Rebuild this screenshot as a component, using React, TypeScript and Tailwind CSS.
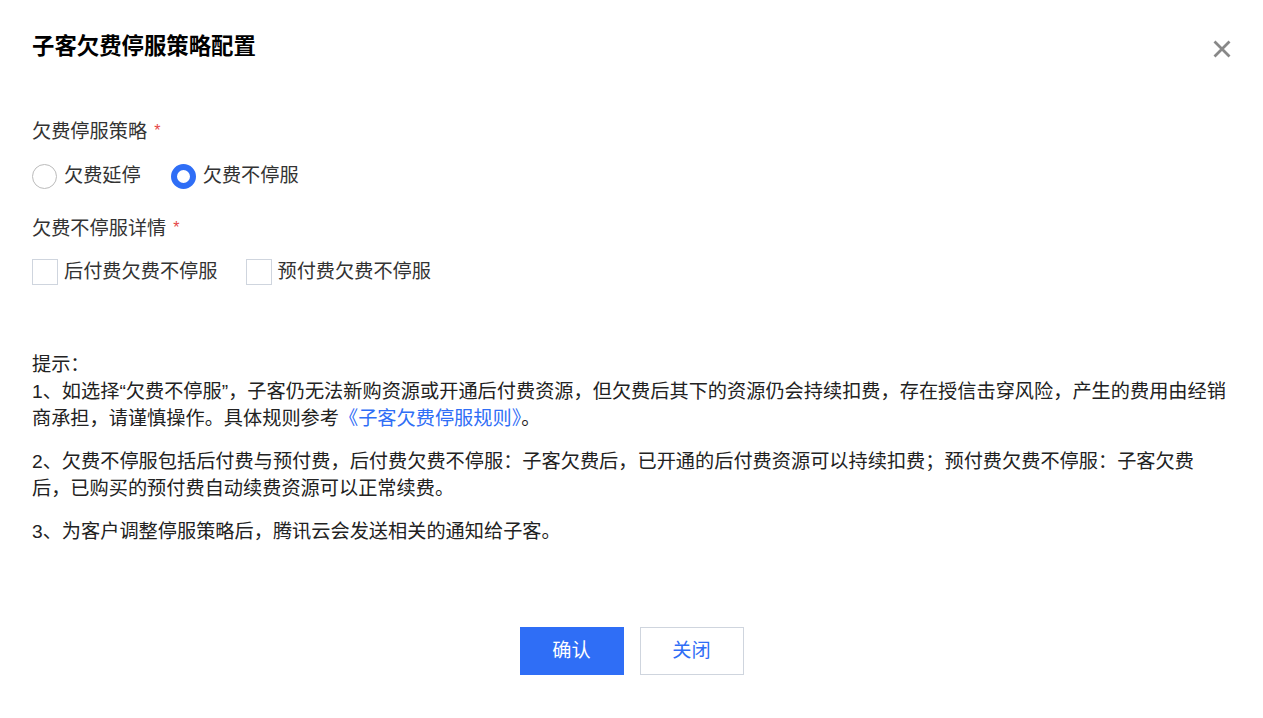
import { useState } from "react";

const fontStack = "font-['Liberation_Sans','Noto_Sans_CJK_SC',sans-serif]";

function Required() {
  return <span className="ml-[7px] text-[16px] leading-none text-[#e54545] relative -top-[1px]">*</span>;
}

function Radio({ checked, label, onClick }: { checked: boolean; label: string; onClick: () => void }) {
  return (
    <button type="button" onClick={onClick} className="flex items-center gap-[7px] cursor-pointer">
      {checked ? (
        <span className="w-[25px] h-[25px] rounded-full border-[6px] border-[#2f6ef6] bg-white" />
      ) : (
        <span className="w-[25px] h-[25px] rounded-full border border-[#bbbbbb] bg-white" />
      )}
      <span className="text-[#333] text-[19.2px] leading-[28px]">{label}</span>
    </button>
  );
}

function Checkbox({ label }: { label: string }) {
  const [checked, setChecked] = useState(false);
  return (
    <button type="button" onClick={() => setChecked(!checked)} className="flex items-center gap-[6px] cursor-pointer">
      <span
        className={
          checked
            ? "w-[26px] h-[26px] border border-[#2f6ef6] bg-[#2f6ef6]"
            : "w-[26px] h-[26px] border border-[#cfd5de] bg-white"
        }
      />
      <span className="text-[#333] text-[19.2px] leading-[28px]">{label}</span>
    </button>
  );
}

export default function App() {
  const [strategy, setStrategy] = useState<"delay" | "keep">("keep");

  return (
    <div className={`${fontStack} min-h-[718px] w-full bg-white px-8`}>
      <div className="pt-8 flex items-center justify-between">
        <h1 className="text-[22.4px] leading-[30px] font-bold text-black">子客欠费停服策略配置</h1>
        <button type="button" className="w-[18px] h-[18px] mt-[4px] cursor-pointer" aria-label="关闭">
          <svg viewBox="0 0 18 18" width="18" height="18">
            <path d="M1.5 1.5L16.5 16.5M16.5 1.5L1.5 16.5" stroke="#888888" strokeWidth="2.8" fill="none" />
          </svg>
        </button>
      </div>

      <div className="mt-[56px] flex items-center text-[19.2px] leading-[28px] text-[#333]">
        欠费停服策略
        <Required />
      </div>
      <div className="mt-4 h-7 flex items-center gap-[30px]">
        <Radio checked={strategy === "delay"} label="欠费延停" onClick={() => setStrategy("delay")} />
        <Radio checked={strategy === "keep"} label="欠费不停服" onClick={() => setStrategy("keep")} />
      </div>

      <div className="mt-[25px] flex items-center text-[19.2px] leading-[28px] text-[#333]">
        欠费不停服详情
        <Required />
      </div>
      <div className="mt-[15px] h-7 flex items-center gap-[28px]">
        <Checkbox label="后付费欠费不停服" />
        <Checkbox label="预付费欠费不停服" />
      </div>

      <div className="mt-[65px] text-[19.2px] leading-[27px] text-[#222]">
        <p>提示：</p>
        <p>
          1、如选择“欠费不停服”，子客仍无法新购资源或开通后付费资源，但欠费后其下的资源仍会持续扣费，存在授信击穿风险，产生的费用由经销商承担，请谨慎操作。具体规则参考
          <a href="#" className="text-[#2f6ef6]">《子客欠费停服规则》</a>。
        </p>
        <p className="mt-4">
          2、欠费不停服包括后付费与预付费，后付费欠费不停服：子客欠费后，已开通的后付费资源可以持续扣费；预付费欠费不停服：子客欠费后，已购买的预付费自动续费资源可以正常续费。
        </p>
        <p className="mt-4">3、为客户调整停服策略后，腾讯云会发送相关的通知给子客。</p>
      </div>

      <div className="mt-[82px] flex justify-center gap-4 pb-[43px]">
        <button type="button" className="w-[104px] h-12 bg-[#2f6ef6] text-white text-[19.2px] cursor-pointer">
          确认
        </button>
        <button
          type="button"
          className="w-[104px] h-12 bg-white border border-[#cfd5de] text-[#2f6ef6] text-[19.2px] cursor-pointer"
        >
          关闭
        </button>
      </div>
    </div>
  );
}
